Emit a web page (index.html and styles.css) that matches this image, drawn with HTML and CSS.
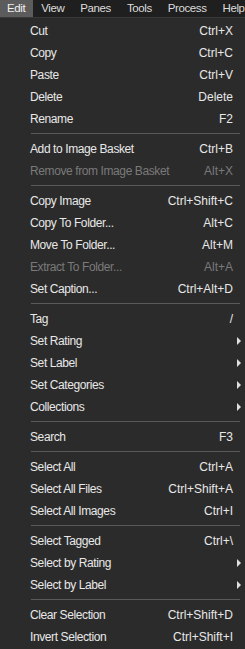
FILE: index.html
```html
<!DOCTYPE html>
<html lang="en">
<head>
    <meta charset="UTF-8">
    <meta name="viewport" content="width=device-width, initial-scale=1.0">
    <title>Edit Menu</title>
    <link rel="stylesheet" href="styles.css">
</head>
<body>
    <div class="menubar">
        <div class="menubar-item active">Edit</div>
        <div class="menubar-item">View</div>
        <div class="menubar-item">Panes</div>
        <div class="menubar-item">Tools</div>
        <div class="menubar-item">Process</div>
        <div class="menubar-item">Help</div>
    </div>

    <div class="menu">
        <div class="item"><span class="label">Cut</span><span class="key">Ctrl+X</span><span class="arrow"></span></div>
        <div class="item"><span class="label">Copy</span><span class="key">Ctrl+C</span><span class="arrow"></span></div>
        <div class="item"><span class="label">Paste</span><span class="key">Ctrl+V</span><span class="arrow"></span></div>
        <div class="item"><span class="label">Delete</span><span class="key">Delete</span><span class="arrow"></span></div>
        <div class="item"><span class="label">Rename</span><span class="key">F2</span><span class="arrow"></span></div>
        <div class="sep"></div>
        <div class="item"><span class="label">Add to Image Basket</span><span class="key">Ctrl+B</span><span class="arrow"></span></div>
        <div class="item disabled"><span class="label">Remove from Image Basket</span><span class="key">Alt+X</span><span class="arrow"></span></div>
        <div class="sep"></div>
        <div class="item"><span class="label">Copy Image</span><span class="key">Ctrl+Shift+C</span><span class="arrow"></span></div>
        <div class="item"><span class="label">Copy To Folder...</span><span class="key">Alt+C</span><span class="arrow"></span></div>
        <div class="item"><span class="label">Move To Folder...</span><span class="key">Alt+M</span><span class="arrow"></span></div>
        <div class="item disabled"><span class="label">Extract To Folder...</span><span class="key">Alt+A</span><span class="arrow"></span></div>
        <div class="item"><span class="label">Set Caption...</span><span class="key">Ctrl+Alt+D</span><span class="arrow"></span></div>
        <div class="sep"></div>
        <div class="item"><span class="label">Tag</span><span class="key">/</span><span class="arrow"></span></div>
        <div class="item"><span class="label">Set Rating</span><span class="key"></span><span class="arrow sub"></span></div>
        <div class="item"><span class="label">Set Label</span><span class="key"></span><span class="arrow sub"></span></div>
        <div class="item"><span class="label">Set Categories</span><span class="key"></span><span class="arrow sub"></span></div>
        <div class="item"><span class="label">Collections</span><span class="key"></span><span class="arrow sub"></span></div>
        <div class="sep"></div>
        <div class="item"><span class="label">Search</span><span class="key">F3</span><span class="arrow"></span></div>
        <div class="sep"></div>
        <div class="item"><span class="label">Select All</span><span class="key">Ctrl+A</span><span class="arrow"></span></div>
        <div class="item"><span class="label">Select All Files</span><span class="key">Ctrl+Shift+A</span><span class="arrow"></span></div>
        <div class="item"><span class="label">Select All Images</span><span class="key">Ctrl+I</span><span class="arrow"></span></div>
        <div class="sep"></div>
        <div class="item"><span class="label">Select Tagged</span><span class="key">Ctrl+\</span><span class="arrow"></span></div>
        <div class="item"><span class="label">Select by Rating</span><span class="key"></span><span class="arrow sub"></span></div>
        <div class="item"><span class="label">Select by Label</span><span class="key"></span><span class="arrow sub"></span></div>
        <div class="sep"></div>
        <div class="item"><span class="label">Clear Selection</span><span class="key">Ctrl+Shift+D</span><span class="arrow"></span></div>
        <div class="item"><span class="label">Invert Selection</span><span class="key">Ctrl+Shift+I</span><span class="arrow"></span></div>
    </div>
</body>
</html>
```

FILE: styles.css
```css
* {
    margin: 0;
    padding: 0;
    box-sizing: border-box;
}

body {
    font-family: 'Liberation Sans', Arial, sans-serif;
    font-size: 12px;
    background-color: #2b2b2b;
    color: #e8e8e8;
    overflow: hidden;
}

.menubar {
    display: flex;
    height: 18px;
    background-color: #1f1f1f;
    border-bottom: 1px solid #383838;
    white-space: nowrap;
    font-size: 11.5px;
    letter-spacing: -0.4px;
}

.menubar-item {
    padding: 0 8px;
    line-height: 17px;
    color: #dcdcdc;
}

.menubar-item.active {
    padding-left: 7px;
    background-color: #5c5c5c;
    color: #f0f0f0;
}

.menu {
    padding-top: 2px;
}

.item {
    display: grid;
    grid-template-columns: 30px 1fr auto 12px;
    height: 22px;
    align-items: center;
    white-space: nowrap;
}

.item .label {
    grid-column: 2;
    letter-spacing: -0.4px;
}

.item .key {
    text-align: right;
}

.item.disabled {
    color: #7a7a7a;
}

.arrow.sub {
    justify-self: end;
    margin-right: 4px;
    width: 0;
    height: 0;
    border-top: 4px solid transparent;
    border-bottom: 4px solid transparent;
    border-left: 4px solid #e0e0e0;
}

.sep {
    height: 1px;
    margin: 3px 5px 4px 31px;
    background-color: #5a5a5a;
}
```
